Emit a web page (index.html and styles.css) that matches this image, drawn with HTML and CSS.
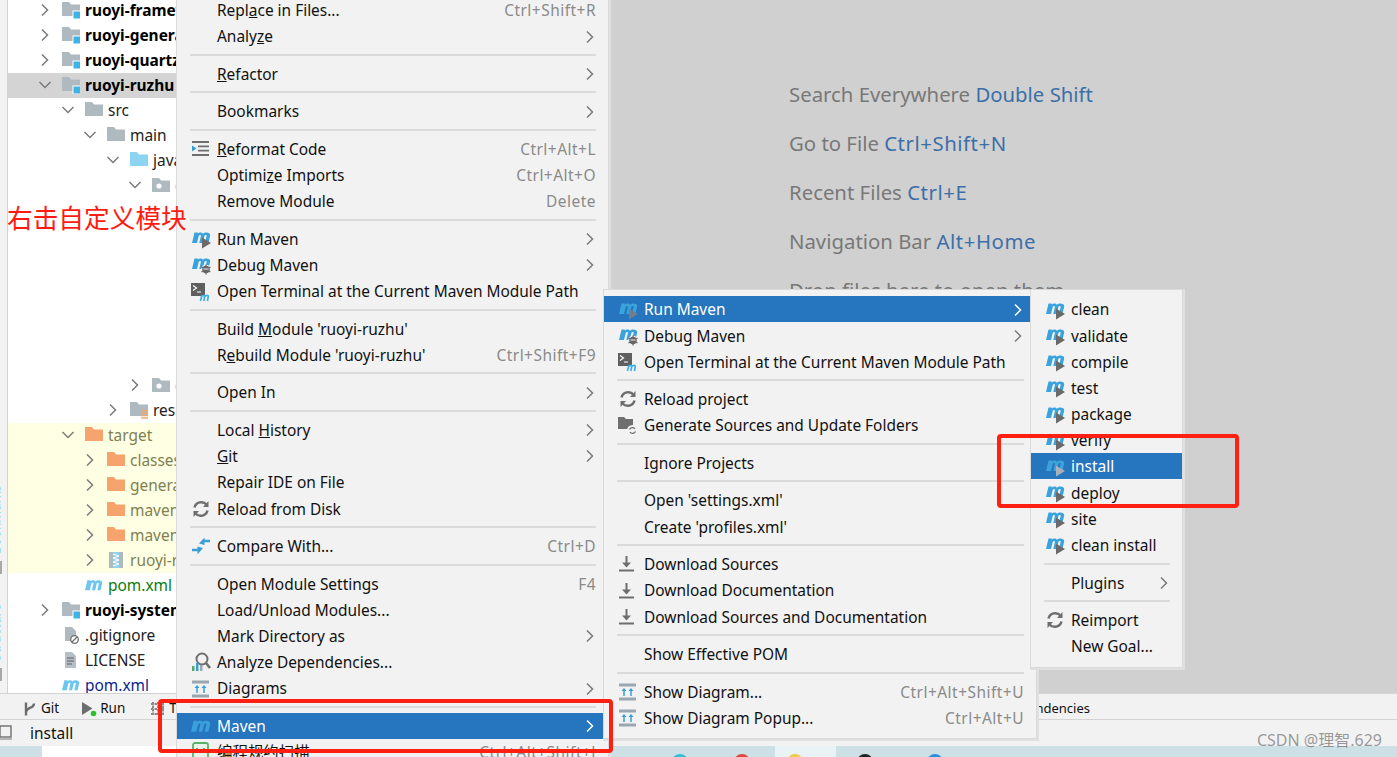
FILE: index.html
```html
<!DOCTYPE html>
<html lang="en">
<head>
<meta charset="utf-8">
<title>IDE Maven menu</title>
<link rel="stylesheet" href="styles.css">
</head>
<body>
<svg class="sprite" aria-hidden="true">
  <symbol id="m" viewBox="1 2.500 19 12"><path d="M1 14 3.500 3.500H6.800L6.600 4.600C8 3.200 11 3 11.900 4.800 13.500 3 19.500 2.800 19.200 6.500L17.400 14H14L15.600 7C15.800 5.800 13.800 5.800 13.400 7L11.700 14H8.300L9.900 7C10.100 5.800 8.100 5.800 7.700 7L6 14z" fill="currentColor"/></symbol>
  <symbol id="runm" viewBox="0 0 20 20"><path d="M1 14 3.500 3.500H6.800L6.600 4.600C8 3.200 11 3 11.900 4.800 13.500 3 19.500 2.800 19.200 6.500L17.400 14H14L15.600 7C15.800 5.800 13.800 5.800 13.400 7L11.700 14H8.300L9.900 7C10.100 5.800 8.100 5.800 7.700 7L6 14z" fill="#3aa3dc"/><path d="M11 8.500 20 14 11 19.500z" fill="currentColor"/></symbol>
  <symbol id="debugm" viewBox="0 0 20 20"><path d="M1 14 3.500 3.500H6.800L6.600 4.600C8 3.200 11 3 11.900 4.800 13.500 3 19.500 2.800 19.200 6.500L17.400 14H14L15.600 7C15.800 5.800 13.800 5.800 13.400 7L11.700 14H8.300L9.900 7C10.100 5.800 8.100 5.800 7.700 7L6 14z" fill="#3aa3dc"/><circle cx="15" cy="14.500" r="4.800" fill="#f2f2f2"/><circle cx="15" cy="14.500" r="3.700" fill="#666"/><path d="M10.500 12 19.500 17M19.500 12 10.500 17M15 9.500V19.500" stroke="#666" stroke-width="1.200"/><path d="M12.500 14H17.500" stroke="#f2f2f2"/></symbol>
  <symbol id="term" viewBox="0 0 20 20"><rect x="0" y="1" width="14" height="13" fill="#5f5f5f"/><path d="M2 3.500 5.500 6 2 8.500M6 10H10" fill="none" stroke="#fff" stroke-width="1.200"/><path d="M9.500 19 10.800 13.500M10.600 14.500C11.600 13 14 13 13.700 14.500L12.800 19M13.800 14.500C14.800 13 17.600 13 17.300 14.500L16.400 19" fill="none" stroke="#3fb0e4" stroke-width="1.700"/></symbol>
  <symbol id="reformat" viewBox="0 0 20 20"><path d="M1 3H18M7 7.300H18M7 11.600H18M1 16H18" stroke="#6e6e6e" stroke-width="1.800"/><path d="M1 6.500 5.500 9.500 1 12.500z" fill="#389fd6"/></symbol>
  <symbol id="reload" viewBox="0 0 20 20"><path d="M3.500 8.500A7 7 0 0 1 15.500 5.500M16.500 11.500A7 7 0 0 1 4.500 14.500" fill="none" stroke="#6e6e6e" stroke-width="2.500"/><path d="M17.500 2V8H12zM2.500 18V12H8z" fill="#6e6e6e"/></symbol>
  <symbol id="compare" viewBox="0 0 20 20"><path d="M19 5H13M1 14H7" stroke="#389fd6" stroke-width="2.400"/><path d="M13.500 1.500 8 7.500 13.500 9zM6.500 10.500 12 12 6.500 18.500z" fill="#389fd6"/></symbol>
  <symbol id="analyze" viewBox="0 0 20 20"><circle cx="11" cy="7" r="5.500" fill="none" stroke="#6e6e6e" stroke-width="2"/><path d="M15 11 19 16" stroke="#6e6e6e" stroke-width="2.600"/><rect x="1" y="14" width="2.500" height="5" fill="#59a869"/><rect x="5" y="11" width="2.500" height="8" fill="#389fd6"/><rect x="9" y="13" width="2.500" height="6" fill="#9aa7b0"/></symbol>
  <symbol id="diagram" viewBox="0 0 20 20"><rect x="1" y="1.500" width="17" height="3" fill="#9aa7b0"/><rect x="1" y="15.500" width="17" height="3" fill="#9aa7b0"/><path d="M6 14V7.500M13 14V7.500" stroke="#389fd6" stroke-width="1.500"/><path d="M3.500 9 6 6 8.500 9zM10.500 9 13 6 15.500 9z" fill="#389fd6"/></symbol>
  <symbol id="folderref" viewBox="0 0 20 20"><path d="M0 1H6L8 3H15V13H0z" fill="#6e6e6e"/><circle cx="14.500" cy="14.500" r="5.500" fill="#f2f2f2"/><path d="M11.500 13.500A3.300 3.300 0 0 1 17 12.800M17.500 15.500A3.300 3.300 0 0 1 12 16.200" fill="none" stroke="#6e6e6e" stroke-width="1.300"/></symbol>
  <symbol id="download" viewBox="0 0 20 20"><path d="M8.500 2V11" stroke="#6e6e6e" stroke-width="2"/><path d="M4 8.500H13L8.500 13.500z" fill="#6e6e6e"/><rect x="1" y="15.500" width="15" height="2" fill="#6e6e6e"/></symbol>
  <symbol id="scan" viewBox="0 0 20 20"><rect x="2" y="1" width="15" height="17" rx="2" fill="#e8f5e9" stroke="#59b368" stroke-width="1.800"/><path d="M6 6V10M13 6V10" stroke="#59b368" stroke-width="2"/></symbol>
  <symbol id="chev-r" viewBox="0 0 10 14"><path d="M2 1.500 7.500 7 2 12.500" fill="none" stroke="currentColor" stroke-width="1.500"/></symbol>
  <symbol id="chev-d" viewBox="0 0 14 10"><path d="M1.500 2 7 7.500 12.500 2" fill="none" stroke="currentColor" stroke-width="1.500"/></symbol>
  <symbol id="folder" viewBox="0 0 18 18"><path d="M0 1H7L9 3.500H18V15H0z" fill="currentColor"/></symbol>
  <symbol id="module" viewBox="0 0 18 18"><path d="M0 1H7L9 3.500H18V15H0z" fill="#aeb9c0"/><rect x="11" y="10" width="8" height="8" fill="#3db3e6" stroke="#fff"/></symbol>
  <symbol id="pkg" viewBox="0 0 18 18"><path d="M0 2H7L9 4.500H18V16H0z" fill="#aeb9c0"/><circle cx="7" cy="10" r="2.600" fill="#fff"/></symbol>
  <symbol id="res" viewBox="0 0 18 18"><path d="M0 1H7L9 3.500H18V15H0z" fill="#aeb9c0"/><path d="M11 9.500H18M11 12H18M11 14.500H18M11 17H18" stroke="#f4a968" stroke-width="1.300"/></symbol>
  <symbol id="jar" viewBox="0 0 18 18"><rect x="2" y="1" width="14" height="16" fill="#aeb9c0"/><rect x="6" y="1" width="6" height="16" fill="#8fd3ee"/><path d="M6 3 12 5 6 7 12 9 6 11 12 13 6 15" fill="none" stroke="#fff"/></symbol>
  <symbol id="ignore" viewBox="0 0 18 18"><path d="M3 1H10L14 5V15H3z" fill="#aeb9c0"/><circle cx="12.500" cy="13.500" r="3.800" fill="#fff" stroke="#6e6e6e" stroke-width="1.300"/><path d="M10 16 15 11" stroke="#6e6e6e" stroke-width="1.300"/></symbol>
  <symbol id="doc" viewBox="0 0 18 18"><path d="M3 1H10L14 5V17H3z" fill="#b6bfc6"/><path d="M5 7H12M5 10H12M5 13H10" stroke="#5f5f5f" stroke-width="1.200"/></symbol>
  <symbol id="git" viewBox="0 0 14 16"><path d="M3 1.500V14.500M11 2.500C11 8 3.500 6 3.500 10.500" fill="none" stroke="#6e6e6e" stroke-width="2.400"/></symbol>
  <symbol id="run" viewBox="0 0 16 16"><path d="M1 1 11.500 7.500 1 14z" fill="#6e6e6e"/><circle cx="12.500" cy="12.500" r="2.800" fill="#2fc12f"/></symbol>
  <symbol id="grid" viewBox="0 0 16 16"><path d="M1 3H15M1 8H15M1 13H15M3 1V15M8 1V15M13 1V15" stroke="#8a8a8a" stroke-width="2" stroke-dasharray="2.500 1"/></symbol>
  <symbol id="square" viewBox="0 0 14 16"><rect x="0" y="1" width="11" height="11" fill="none" stroke="#6e6e6e" stroke-width="1.400"/><path d="M0 14H12" stroke="#9a9a9a" stroke-width="1.400"/></symbol>
</svg>

<div class="app">
  <div class="main">
    <aside class="strip">
      <span class="strip-label">Bookmarks</span>
      <span class="strip-block"></span>
      <span class="strip-label">Structure</span>
      <span class="strip-block"></span>
    </aside>
    <nav class="tree">
      <div class="row l0"><svg class="chev"><use href="#chev-r"/></svg><svg class="ticon"><use href="#module"/></svg><b>ruoyi-framework</b></div>
      <div class="row l0"><svg class="chev"><use href="#chev-r"/></svg><svg class="ticon"><use href="#module"/></svg><b>ruoyi-generator</b></div>
      <div class="row l0"><svg class="chev"><use href="#chev-r"/></svg><svg class="ticon"><use href="#module"/></svg><b>ruoyi-quartz</b></div>
      <div class="row l0 selected"><svg class="chev-open"><use href="#chev-d"/></svg><svg class="ticon"><use href="#module"/></svg><b>ruoyi-ruzhu</b></div>
      <div class="row l1"><svg class="chev-open"><use href="#chev-d"/></svg><svg class="ticon grey"><use href="#folder"/></svg><span>src</span></div>
      <div class="row l2"><svg class="chev-open"><use href="#chev-d"/></svg><svg class="ticon grey"><use href="#folder"/></svg><span>main</span></div>
      <div class="row l3"><svg class="chev-open"><use href="#chev-d"/></svg><svg class="ticon sky"><use href="#folder"/></svg><span>java</span></div>
      <div class="row l4"><svg class="chev-open"><use href="#chev-d"/></svg><svg class="ticon"><use href="#pkg"/></svg><span>com</span></div>
      <div class="tree-gap"></div>
      <div class="row l4"><svg class="chev"><use href="#chev-r"/></svg><svg class="ticon"><use href="#pkg"/></svg><span>com</span></div>
      <div class="row l3"><svg class="chev"><use href="#chev-r"/></svg><svg class="ticon"><use href="#res"/></svg><span>resources</span></div>
      <div class="excluded">
        <div class="row l1"><svg class="chev-open"><use href="#chev-d"/></svg><svg class="ticon orange"><use href="#folder"/></svg><span>target</span></div>
        <div class="row l2"><svg class="chev"><use href="#chev-r"/></svg><svg class="ticon orange"><use href="#folder"/></svg><span>classes</span></div>
        <div class="row l2"><svg class="chev"><use href="#chev-r"/></svg><svg class="ticon orange"><use href="#folder"/></svg><span>generated</span></div>
        <div class="row l2"><svg class="chev"><use href="#chev-r"/></svg><svg class="ticon orange"><use href="#folder"/></svg><span>maven-archiver</span></div>
        <div class="row l2"><svg class="chev"><use href="#chev-r"/></svg><svg class="ticon orange"><use href="#folder"/></svg><span>maven-status</span></div>
        <div class="row l2"><svg class="chev"><use href="#chev-r"/></svg><svg class="ticon"><use href="#jar"/></svg><span>ruoyi-ruzhu.jar</span></div>
      </div>
      <div class="row l1 nochev"><svg class="ticon sky-m"><use href="#m"/></svg><span class="green">pom.xml</span></div>
      <div class="row l0"><svg class="chev"><use href="#chev-r"/></svg><svg class="ticon"><use href="#module"/></svg><b>ruoyi-system</b></div>
      <div class="row l0 nochev"><svg class="ticon"><use href="#ignore"/></svg><span>.gitignore</span></div>
      <div class="row l0 nochev"><svg class="ticon"><use href="#doc"/></svg><span>LICENSE</span></div>
      <div class="row l0 nochev"><svg class="ticon sky-m"><use href="#m"/></svg><span class="navy">pom.xml</span></div>
    </nav>
    <section class="editor">
      <p>Search Everywhere <em>Double Shift</em></p>
      <p>Go to File <em class="keys">Ctrl+Shift+N</em></p>
      <p>Recent Files <em class="keys">Ctrl+E</em></p>
      <p>Navigation Bar <em class="keys">Alt+Home</em></p>
      <p>Drop files here to open them</p>
    </section>
  </div>
  <div class="toolbar">
    <span class="tool tool-git"><svg class="tool-icon"><use href="#git"/></svg>Git</span>
    <span class="tool tool-run"><svg class="tool-icon"><use href="#run"/></svg>Run</span>
    <span class="tool tool-todo"><svg class="tool-icon"><use href="#grid"/></svg>TODO</span>
    <span class="tool tool-dep">Dependencies</span>
  </div>
  <div class="status"><svg class="status-icon"><use href="#square"/></svg><span>install</span></div>
  <div class="taskbar">
    <span class="task-light"></span>
    <span class="task-white"></span>
    <span class="task-gap"></span>
    <i class="dot dot-cyan"></i>
    <i class="dot dot-red"></i>
    <span class="task-active"><i class="dot dot-yellow"></i></span>
    <i class="dot dot-black"></i>
    <i class="dot dot-blue"></i>
  </div>
</div>

<div class="menu menu-main">
  <div class="item"><i class="ic"></i><span class="lbl">Repl<u>a</u>ce in Files...</span><small>Ctrl+Shift+R</small></div>
  <div class="item"><i class="ic"></i><span class="lbl">Analy<u>z</u>e</span><svg class="arrow"><use href="#chev-r"/></svg></div>
  <hr>
  <div class="item"><i class="ic"></i><span class="lbl"><u>R</u>efactor</span><svg class="arrow"><use href="#chev-r"/></svg></div>
  <hr>
  <div class="item"><i class="ic"></i><span class="lbl">Bookmarks</span><svg class="arrow"><use href="#chev-r"/></svg></div>
  <hr>
  <div class="item"><svg class="ic"><use href="#reformat"/></svg><span class="lbl"><u>R</u>eformat Code</span><small>Ctrl+Alt+L</small></div>
  <div class="item"><i class="ic"></i><span class="lbl">Optimi<u>z</u>e Imports</span><small>Ctrl+Alt+O</small></div>
  <div class="item"><i class="ic"></i><span class="lbl">Remove Module</span><small>Delete</small></div>
  <hr>
  <div class="item"><svg class="ic"><use href="#runm"/></svg><span class="lbl">Run Maven</span><svg class="arrow"><use href="#chev-r"/></svg></div>
  <div class="item"><svg class="ic"><use href="#debugm"/></svg><span class="lbl">Debug Maven</span><svg class="arrow"><use href="#chev-r"/></svg></div>
  <div class="item"><svg class="ic"><use href="#term"/></svg><span class="lbl">Open Terminal at the Current Maven Module Path</span></div>
  <hr>
  <div class="item"><i class="ic"></i><span class="lbl">Build <u>M</u>odule 'ruoyi-ruzhu'</span></div>
  <div class="item"><i class="ic"></i><span class="lbl">R<u>e</u>build Module 'ruoyi-ruzhu'</span><small>Ctrl+Shift+F9</small></div>
  <hr>
  <div class="item"><i class="ic"></i><span class="lbl">Open In</span><svg class="arrow"><use href="#chev-r"/></svg></div>
  <hr>
  <div class="item"><i class="ic"></i><span class="lbl">Local <u>H</u>istory</span><svg class="arrow"><use href="#chev-r"/></svg></div>
  <div class="item"><i class="ic"></i><span class="lbl"><u>G</u>it</span><svg class="arrow"><use href="#chev-r"/></svg></div>
  <div class="item"><i class="ic"></i><span class="lbl">Repair IDE on File</span></div>
  <div class="item"><svg class="ic"><use href="#reload"/></svg><span class="lbl">Reload from Disk</span></div>
  <hr>
  <div class="item"><svg class="ic"><use href="#compare"/></svg><span class="lbl">Compare With...</span><small>Ctrl+D</small></div>
  <hr>
  <div class="item"><i class="ic"></i><span class="lbl">Open Module Settings</span><small>F4</small></div>
  <div class="item"><i class="ic"></i><span class="lbl">Load/Unload Modules...</span></div>
  <div class="item"><i class="ic"></i><span class="lbl">Mark Directory as</span><svg class="arrow"><use href="#chev-r"/></svg></div>
  <div class="item"><svg class="ic"><use href="#analyze"/></svg><span class="lbl">Analyze Dependencies...</span></div>
  <div class="item"><svg class="ic"><use href="#diagram"/></svg><span class="lbl">Diagrams</span><svg class="arrow"><use href="#chev-r"/></svg></div>
  <hr>
  <div class="item active"><svg class="ic ic-m"><use href="#m"/></svg><span class="lbl">Maven</span><svg class="arrow"><use href="#chev-r"/></svg></div>
  <div class="item"><svg class="ic"><use href="#scan"/></svg><span class="lbl">编程规约扫描</span><small>Ctrl+Alt+Shift+J</small></div>
</div>

<div class="menu menu-maven">
  <div class="item active"><svg class="ic ic-run-active"><use href="#runm"/></svg><span class="lbl">Run Maven</span><svg class="arrow"><use href="#chev-r"/></svg></div>
  <div class="item"><svg class="ic"><use href="#debugm"/></svg><span class="lbl">Debug Maven</span><svg class="arrow"><use href="#chev-r"/></svg></div>
  <div class="item"><svg class="ic"><use href="#term"/></svg><span class="lbl">Open Terminal at the Current Maven Module Path</span></div>
  <hr>
  <div class="item"><svg class="ic"><use href="#reload"/></svg><span class="lbl">Reload project</span></div>
  <div class="item"><svg class="ic"><use href="#folderref"/></svg><span class="lbl">Generate Sources and Update Folders</span></div>
  <hr>
  <div class="item"><i class="ic"></i><span class="lbl">Ignore Projects</span></div>
  <hr>
  <div class="item"><i class="ic"></i><span class="lbl">Open 'settings.xml'</span></div>
  <div class="item"><i class="ic"></i><span class="lbl">Create 'profiles.xml'</span></div>
  <hr>
  <div class="item"><svg class="ic"><use href="#download"/></svg><span class="lbl">Download Sources</span></div>
  <div class="item"><svg class="ic"><use href="#download"/></svg><span class="lbl">Download Documentation</span></div>
  <div class="item"><svg class="ic"><use href="#download"/></svg><span class="lbl">Download Sources and Documentation</span></div>
  <hr>
  <div class="item"><i class="ic"></i><span class="lbl">Show Effective POM</span></div>
  <hr>
  <div class="item"><svg class="ic"><use href="#diagram"/></svg><span class="lbl">Show Diagram...</span><small>Ctrl+Alt+Shift+U</small></div>
  <div class="item"><svg class="ic"><use href="#diagram"/></svg><span class="lbl">Show Diagram Popup...</span><small>Ctrl+Alt+U</small></div>
</div>

<div class="menu menu-run">
  <div class="item"><svg class="ic"><use href="#runm"/></svg><span class="lbl">clean</span></div>
  <div class="item"><svg class="ic"><use href="#runm"/></svg><span class="lbl">validate</span></div>
  <div class="item"><svg class="ic"><use href="#runm"/></svg><span class="lbl">compile</span></div>
  <div class="item"><svg class="ic"><use href="#runm"/></svg><span class="lbl">test</span></div>
  <div class="item"><svg class="ic"><use href="#runm"/></svg><span class="lbl">package</span></div>
  <div class="item"><svg class="ic"><use href="#runm"/></svg><span class="lbl">verify</span></div>
  <div class="item active"><svg class="ic ic-run-active"><use href="#runm"/></svg><span class="lbl">install</span></div>
  <div class="item"><svg class="ic"><use href="#runm"/></svg><span class="lbl">deploy</span></div>
  <div class="item"><svg class="ic"><use href="#runm"/></svg><span class="lbl">site</span></div>
  <div class="item"><svg class="ic"><use href="#runm"/></svg><span class="lbl">clean install</span></div>
  <hr>
  <div class="item"><i class="ic"></i><span class="lbl">Plugins</span><svg class="arrow"><use href="#chev-r"/></svg></div>
  <hr>
  <div class="item"><svg class="ic"><use href="#reload"/></svg><span class="lbl">Reimport</span></div>
  <div class="item"><i class="ic"></i><span class="lbl">New Goal...</span></div>
</div>

<div class="note">右击自定义模块</div>
<div class="mark mark-maven"></div>
<div class="mark mark-install"></div>
<div class="watermark">CSDN @理智.629</div>
</body>
</html>
```
FILE: styles.css
```css
* { box-sizing: border-box; }
html, body { margin: 0; height: 100%; }
body {
  position: relative;
  width: 1397px;
  height: 757px;
  overflow: hidden;
  background: #f2f2f2;
  color: #111;
  font: 15.450px/1.2 "Noto Sans", "Noto Sans CJK SC", sans-serif;
}
.sprite { position: absolute; width: 0; height: 0; }

.app { display: grid; grid-template-rows: 693px 27px 26px 11px; height: 757px; }
.main { display: flex; min-height: 0; overflow: hidden; }

.strip {
  width: 8px;
  flex: none;
  display: flex;
  flex-direction: column;
  align-items: flex-start;
  background: #f2f2f2;
  border-right: 1px solid #d2d2d2;
  overflow: hidden;
  padding-top: 485px;
}
.strip-label {
  writing-mode: vertical-rl;
  transform: rotate(180deg);
  margin-left: -13.500px;
  font-size: 13px;
  line-height: 17px;
  color: #0a1fa0;
  white-space: nowrap;
  flex: none;
}
.strip-block { width: 2px; height: 13px; margin: 7px 0 30px; background: #a8a8a8; flex: none; }

.tree { width: 169px; flex: none; background: #fff; margin-top: -2.5px; overflow: hidden; }
.row { display: flex; align-items: center; height: 25px; white-space: nowrap; overflow: hidden; color: #222; }
.row b { color: #000; font-weight: 700; }
.l0 { padding-left: 32px; }
.l1 { padding-left: 55px; }
.l2 { padding-left: 77px; }
.l3 { padding-left: 100px; }
.l4 { padding-left: 122px; }
.nochev.l1 { padding-left: 77px; }
.nochev.l0 { padding-left: 54px; }
.selected { background: #d4d4d4; }
.excluded { background: #ffffe4; }
.excluded .row span { color: #7f7f52; }
.chev { width: 10px; height: 14px; margin-right: 12px; color: #7a7a7a; flex: none; }
.chev-open { width: 14px; height: 10px; margin: 0 10px 0 -2px; color: #7a7a7a; flex: none; }
.ticon { width: 18px; height: 18px; margin-right: 5px; flex: none; }
.grey { color: #aeb9c0; }
.sky { color: #8dd4f0; }
.orange { color: #f7a36e; }
.sky-m { color: #6cc6ef; }
.green { color: #0a7d0a; }
.navy { color: #0a1f8f; }
.tree-gap { height: 175px; }

.editor { flex: 1; background: #d0d0d0; padding: 80.500px 0 0 612px; overflow: hidden; }
.editor p { margin: 0 0 23px; height: 26px; font-size: 20.350px; line-height: 26px; color: #787878; white-space: nowrap; }
.editor em { font-style: normal; color: #3b6fa8; }
.editor .keys { letter-spacing: .55px; }

.toolbar { display: flex; align-items: center; padding-top: 4px; background: #f2f2f2; border-top: 1px solid #d4d4d4; border-bottom: 1px solid #d4d4d4; font-size: 13.500px; }
.tool { display: flex; align-items: center; white-space: nowrap; }
.tool-icon { width: 16px; height: 16px; margin-right: 3px; flex: none; }
.tool-git { margin-left: 22px; }
.tool-run { margin-left: 22px; }
.tool-todo { margin-left: 25px; }
.tool-dep { margin-left: auto; margin-right: 307px; font-size: 13px; }

.status { display: flex; align-items: center; background: #f2f2f2; }
.status-icon { width: 14px; height: 16px; margin-right: 16px; flex: none; }

.taskbar { display: flex; align-items: flex-start; background: #cde0e5; overflow: hidden; }
.task-light { width: 42px; flex: none; }
.task-white { width: 566px; height: 11px; background: #fff; flex: none; }
.task-gap { width: 64px; flex: none; }
.task-active { display: flex; width: 61px; height: 11px; margin-left: 25px; background: #e9f2f4; padding: 8px 0 0 12px; flex: none; }
.dot { display: block; width: 16px; height: 16px; border-radius: 50%; margin-top: 8px; flex: none; }
.dot-cyan { background: #2fc0d8; }
.dot-red { background: #e0483c; margin-left: 46px; }
.task-active .dot { margin-top: 0; }
.dot-yellow { background: #f4c84a; }
.dot-black { background: #222; margin-left: 21px; }
.dot-blue { background: #2a8fe0; margin-left: 54px; }

.note { position: absolute; left: 7px; top: 200px; font: 25.700px/34px "Noto Sans CJK SC", sans-serif; color: #ff1a12; white-space: nowrap; }

.menu { position: absolute; background: #f2f2f2; box-shadow: 0 0 0 1px #dadada, 1px 1px 0 2px #e0e0e0; color: #111; }
.menu-main { left: 177px; top: -3.100px; width: 431px; height: 790px; }
.menu-maven { left: 604px; top: 290px; width: 432px; height: 448px; padding-top: 6px; }
.menu-run { left: 1031px; top: 290px; width: 151px; height: 377px; padding-top: 6px; }

.item { display: flex; align-items: center; height: 26.200px; padding: 1px 12px 0 14px; white-space: nowrap; }
.ic { display: block; width: 20px; height: 20px; margin-right: 6px; flex: none; color: #6a6a6a; }
.lbl { flex: none; }
.item small { margin-left: auto; font-size: inherit; letter-spacing: .5px; color: #8a8a8a; }
.arrow { width: 10px; height: 14px; margin-left: auto; margin-right: 1px; color: #7a7a7a; flex: none; }
.menu hr { height: 2px; margin: 4.700px 12px 4.650px 13px; border: 0; background: #dbdbdb; }
.active { background: #2675bf; color: #fff; }
.active .arrow { color: #fff; }
.ic-m { color: #3aa0dc; }
.ic-run-active { color: #6f7f8e; }
.menu-run .ic-run-active { color: #a8b0b8; }

.mark { position: absolute; border: 4px solid #ff2012; border-radius: 4px; }
.mark-maven { left: 158px; top: 699px; width: 455px; height: 54px; }
.mark-install { left: 997px; top: 434px; width: 242px; height: 74px; }

.watermark { position: absolute; right: 15px; top: 731px; font-size: 16px; color: rgba(90, 90, 90, .6); white-space: nowrap; }
```
